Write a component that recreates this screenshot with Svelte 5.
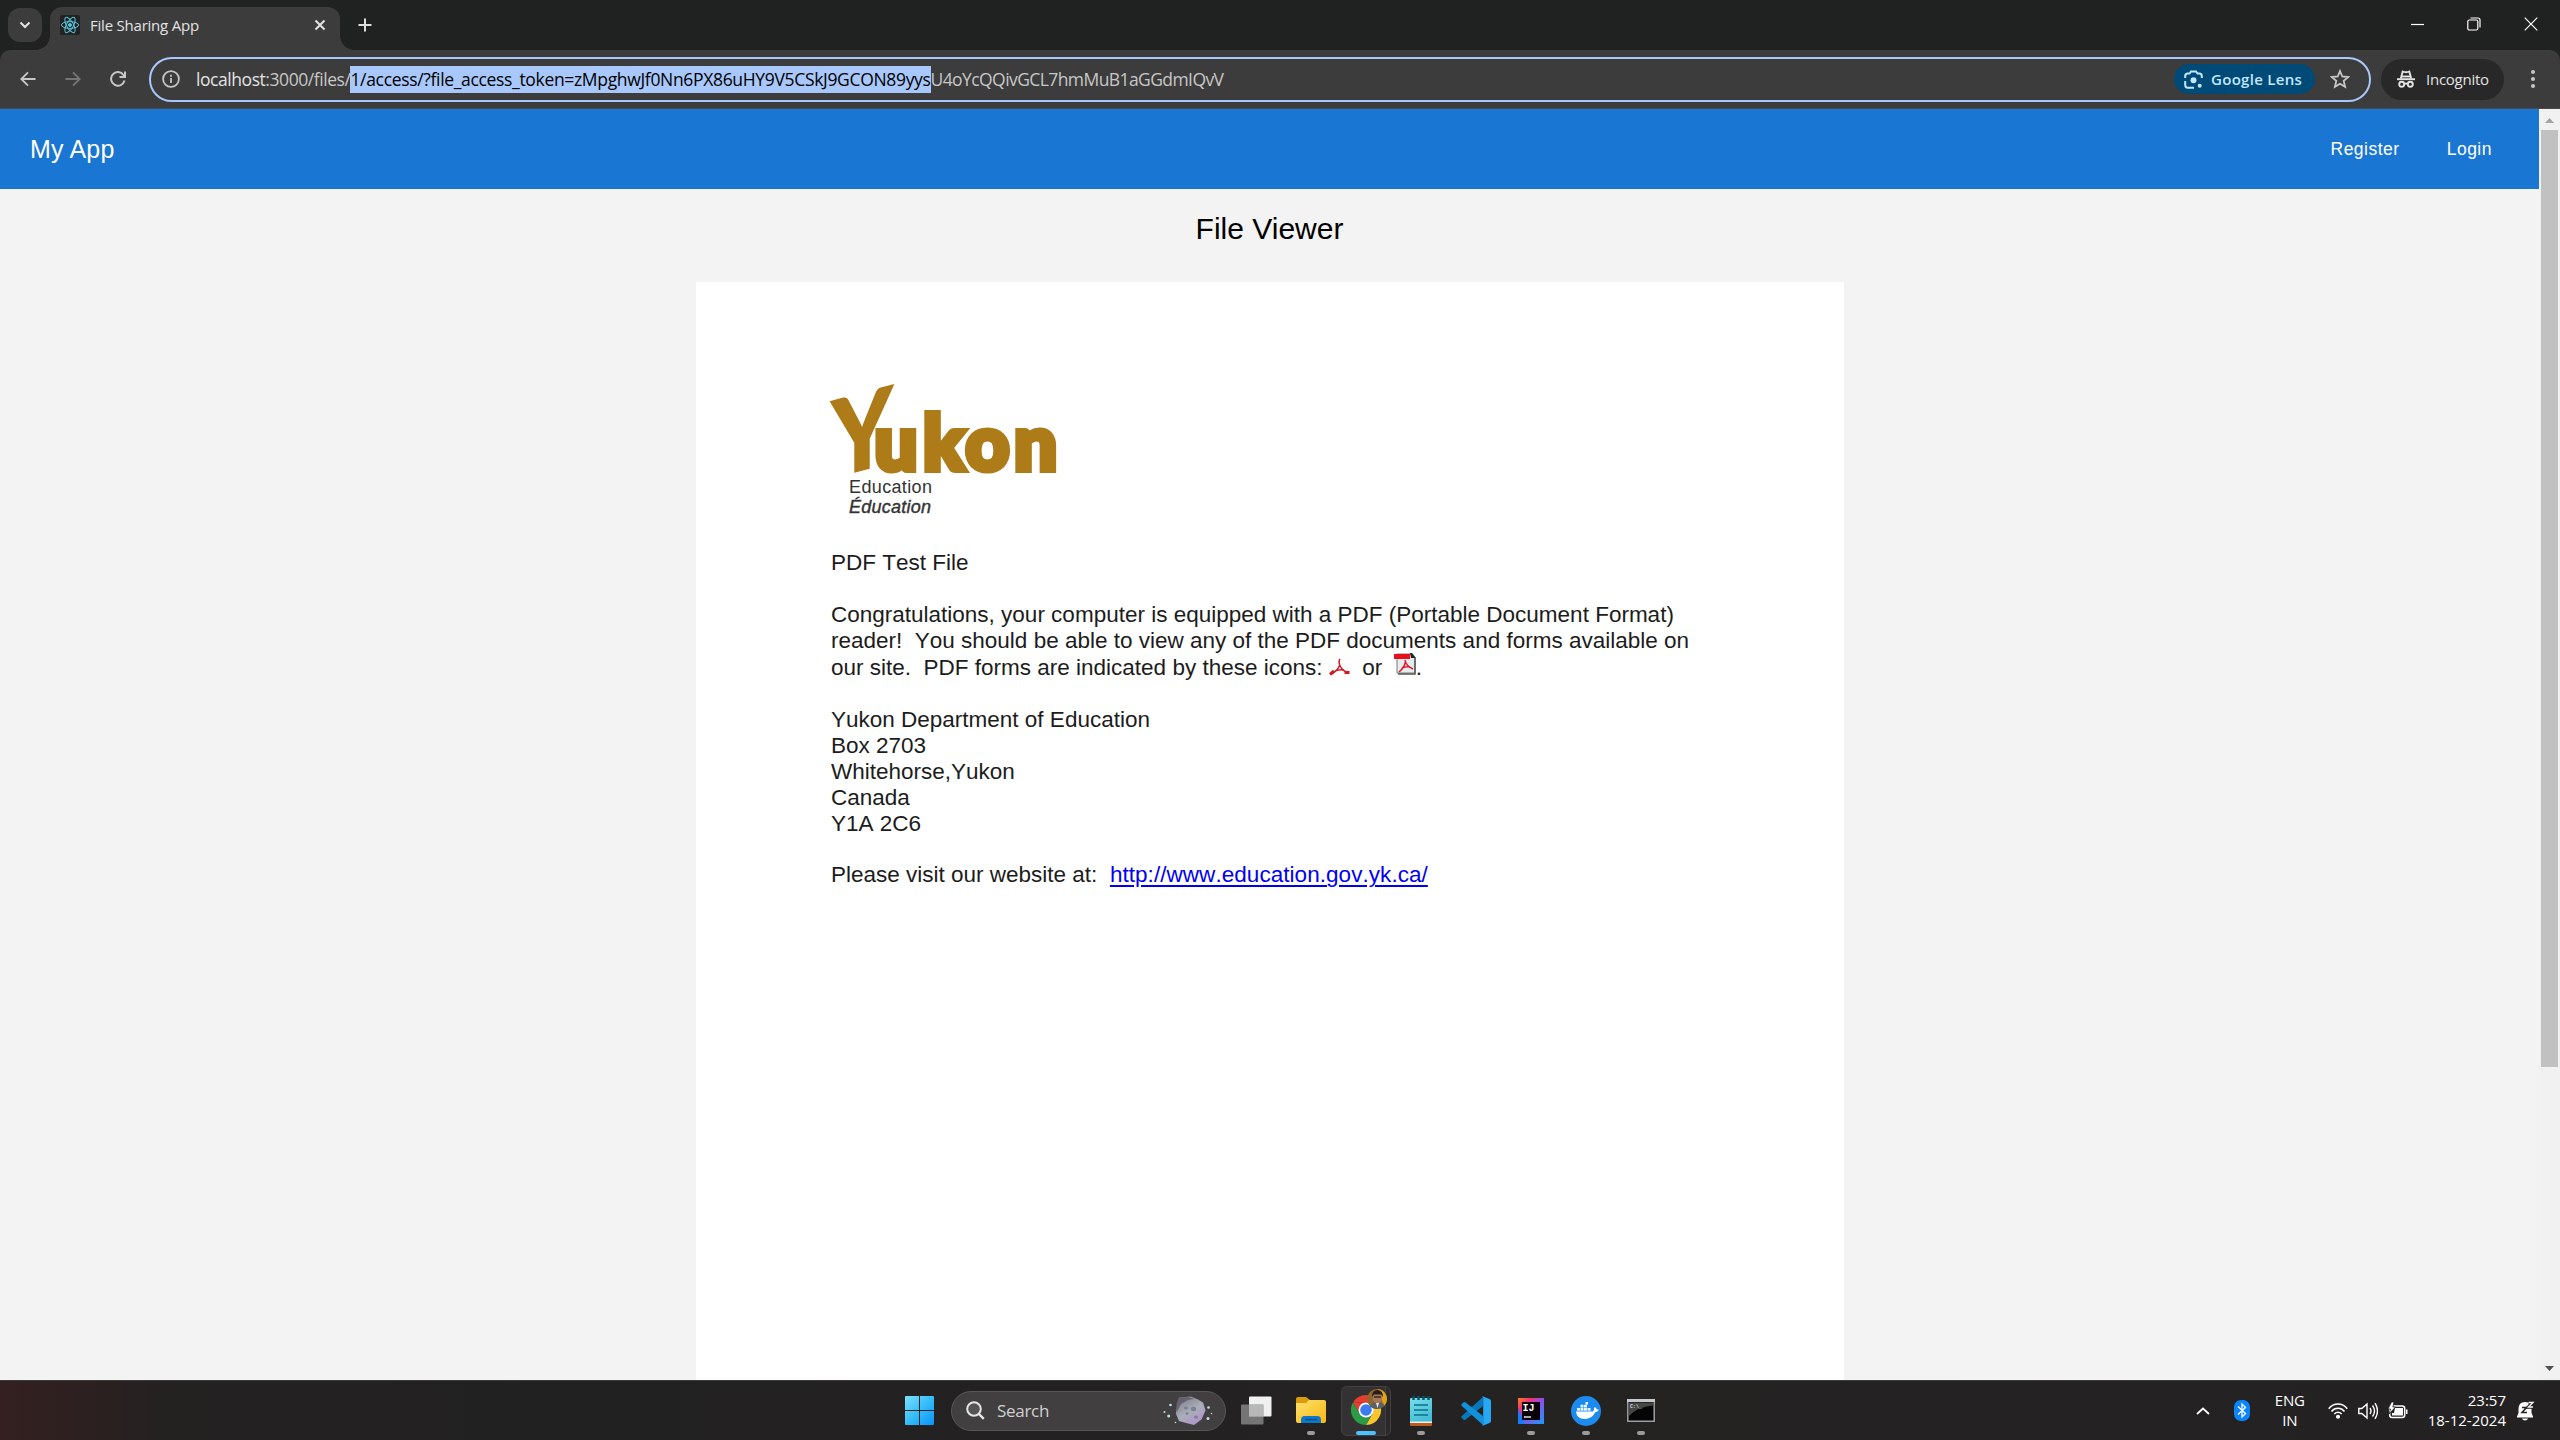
<script>
  const intro = [
    'Congratulations, your computer is equipped with a PDF (Portable Document Format)',
    'reader!\u00a0 You should be able to view any of the PDF documents and forms available on',
  ];
  const address = ['Yukon Department of Education', 'Box 2703', 'Whitehorse,Yukon', 'Canada', 'Y1A 2C6'];
</script>

<div class="screen">
  <div class="tabs">
    <div class="tabsearch"><svg width="12" height="8" viewBox="0 0 12 8"><path d="M1.5 1.5 6 6l4.500-4.500" fill="none" stroke="#e3e3e3" stroke-width="2" /></svg></div>
    <div class="tab">
      <div class="fav">
        <svg width="20" height="20" viewBox="-10 -10 20 20" fill="none" stroke="#58c4dc" stroke-width="1">
          <ellipse rx="8.600" ry="3.400" /><ellipse rx="8.600" ry="3.400" transform="rotate(60)" /><ellipse rx="8.600" ry="3.400" transform="rotate(120)" />
          <circle r="1.500" fill="#58c4dc" />
        </svg>
      </div>
      <span class="tabtitle">File Sharing App</span>
      <svg class="tabclose" width="12" height="12" viewBox="0 0 12 12"><path d="m1.500 1.500 9 9m0-9-9 9" stroke="#e3e3e3" stroke-width="2" /></svg>
    </div>
    <svg class="plus" width="14" height="14" viewBox="0 0 14 14"><path d="M7 0.500v13M0.500 7h13" stroke="#dedede" stroke-width="2" /></svg>
    <div class="wincontrols">
      <svg width="13" height="14" viewBox="0 0 13 14"><path d="M0 7.500h13" stroke="#fff" stroke-width="1.200" /></svg>
      <svg width="14" height="14" viewBox="0 0 14 14" fill="none" stroke="#fff" stroke-width="1.200"><rect x="0.800" y="3" width="10" height="10" rx="1.500" /><path d="M3.500 1h7.500q2 0 2 2v7.500" /></svg>
      <svg width="14" height="14" viewBox="0 0 14 14"><path d="m0.700 0.700 12.600 12.600m0-12.600L0.700 13.300" stroke="#fff" stroke-width="1.200" /></svg>
    </div>
  </div>

  <div class="toolbar">
    <div class="nav">
      <svg width="16" height="16" viewBox="0 0 16 16" fill="none" stroke="#c7c7c7" stroke-width="1.900"><path d="M15.500 8H1.500M8 1.300 1.300 8 8 14.700" /></svg>
      <svg width="16" height="16" viewBox="0 0 16 16" fill="none" stroke="#757575" stroke-width="1.900"><path d="M0.500 8h14M8 1.300 14.700 8 8 14.700" /></svg>
      <svg width="16" height="16" viewBox="0 0 16 16" fill="none" stroke="#c7c7c7" stroke-width="2"><path d="M14.500 9.500A6.800 6.800 0 1 1 13.500 4L15 6M15 0.500V6H9.500" /></svg>
    </div>
    <div class="omnibox">
      <svg class="info" width="18" height="18" viewBox="0 0 18 18"><circle cx="9" cy="9" r="7.900" fill="none" stroke="#c7c7c7" stroke-width="1.800" /><path d="M9 8v5M9 4.800v1.900" stroke="#c7c7c7" stroke-width="1.800" /></svg>
      <div class="url"><span class="host">localhost</span><span class="path">:3000/files/</span><span class="selected">1/access/?file_access_token=zMpghwJf0Nn6PX86uHY9V5CSkJ9GCON89yys</span><span class="rest">U4oYcQQivGCL7hmMuB1aGGdmIQvV</span></div>
      <div class="lens">
        <svg width="19" height="19" viewBox="0 0 19 19" fill="none" stroke="#c2e7ff" stroke-width="2"><path d="M1.200 8V6q0-2.500 2.500-2.500H5.500L7 1.500h5l1.500 2h1.800q2.500 0 2.500 2.500V8M1.200 11v4q0 2.700 2.500 2.700H10" /><circle cx="9.500" cy="10.200" r="3" fill="#c2e7ff" stroke="none" /><circle cx="15.700" cy="15.700" r="2" fill="#c2e7ff" stroke="none" /></svg>
        <span>Google Lens</span>
      </div>
      <svg class="star" width="20" height="20" viewBox="0 0 20 20"><path d="m10 2 2.300 5.500 6 .5-4.600 3.900 1.400 5.900L10 14.700l-5.100 3.100 1.400-5.900L1.700 8l6-.5z" fill="none" stroke="#c7c7c7" stroke-width="1.800" /></svg>
    </div>
    <div class="incognito">
      <svg width="18" height="18" viewBox="0 0 18 18" fill="none" stroke="#e3e3e3" stroke-width="1.900"><path d="M0 9.200h18" /><path d="M3.800 8.500 5.700 1.500q1.600.7 3.300.7t3.300-.7l1.900 7" /><path d="M4 6.500h10" /><circle cx="4.700" cy="14.300" r="2.500" /><circle cx="13.300" cy="14.300" r="2.500" /><path d="M7.200 14q1.800-1 3.600 0" /></svg>
      <span>Incognito</span>
    </div>
    <svg class="kebab" width="4" height="18" viewBox="0 0 4 18" fill="#c7c7c7"><circle cx="2" cy="2" r="2" /><circle cx="2" cy="9" r="2" /><circle cx="2" cy="16" r="2" /></svg>
  </div>

  <div class="viewport">
    <main>
      <header>
        <span class="brand">My App</span>
        <span class="link register">Register</span>
        <span class="link login">Login</span>
      </header>
      <h1>File Viewer</h1>
      <article>
        <svg class="logo" width="240" height="140" viewBox="0 0 240 140">
          <g class="wordmark">
            <text x="1" y="90" class="cap" textLength="60" lengthAdjust="spacingAndGlyphs" transform="translate(30 90) skewY(-15) translate(-30 -90)">Y</text>
            <text x="43.500 92 134.500 183" y="89.500" class="low">ukon</text>
          </g>
          <text x="18" y="113" class="dept" textLength="83">Education</text>
          <text x="18" y="133" class="dept fr" textLength="82">Éducation</text>
        </svg>
        <div class="copy">
          <p>PDF Test File</p>
          <p>
            {#each intro as line}<span class="line">{line}</span>{/each}
            <span class="line icons">our site.&nbsp; PDF forms are indicated by these icons: <svg class="acro" width="21" height="18" viewBox="0 0 21 18" fill="none" stroke="#cf1b22"><path d="M11 1q-1.500 1.500-.5 5.500 2 5.500 7 7.500M10.500 7.500Q8 13.500 2.500 15.800" stroke-width="1.500" /><path d="M6 12.800q4-1.300 8.500-1" stroke-width="1.400" /><path d="M1 16.500 5 13M15.500 14.500h5" stroke-width="3" /></svg>&nbsp; or&nbsp; <svg class="pdf" width="22" height="23" viewBox="0 0 22 23"><path d="M3 2h14l4 4v15H3z" fill="#e5ecea" stroke="#71807e" /><path d="M21 6v16H4" fill="none" stroke="#555" stroke-width="1.500" /><path d="M16 1h2l4 5h-5z" fill="#222" /><path d="M0 2h16v5H0z" fill="#e8101b" /><path d="M11 8q1 6 8 9M11.500 10Q10 16 5 20M8 16q4-2 8-1" fill="none" stroke="#dc1630" stroke-width="1.500" /></svg>.</span>
          </p>
          <p>{#each address as line}<span class="line">{line}</span>{/each}</p>
          <p>Please visit our website at:&nbsp; <span class="web">http://www.education.gov.yk.ca/</span></p>
        </div>
      </article>
    </main>
    <div class="scrollbar">
      <svg width="9" height="5" viewBox="0 0 9 5"><path d="M0 5 4.500 0 9 5z" fill="#a3a3a3" /></svg>
      <div class="thumb"></div>
      <svg class="down" width="9" height="5" viewBox="0 0 9 5"><path d="M0 0h9L4.500 5z" fill="#505050" /></svg>
    </div>
  </div>

  <footer>
    <div class="apps">
      <svg class="win" width="29" height="29" viewBox="0 0 29 29">
        <defs><linearGradient id="wg" x1="0" y1="0" x2="29" y2="29" gradientUnits="userSpaceOnUse"><stop stop-color="#7fe0ff" /><stop offset="0.500" stop-color="#35bdf8" /><stop offset="1" stop-color="#0a93fb" /></linearGradient></defs>
        <path d="M0 1q0-1 1-1h13v14H0zM15 0h13q1 0 1 1v13H15zM0 15h14v14H1q-1 0-1-1zM15 15h14v13q0 1-1 1H15z" fill="url(#wg)" />
      </svg>
      <div class="search">
        <svg width="19" height="19" viewBox="0 0 19 19"><circle cx="8" cy="8" r="6.800" fill="#555" stroke="#e6e6e6" stroke-width="2" /><path d="m12.800 12.800 5 5" stroke="#e6e6e6" stroke-width="2.400" /></svg>
        <span>Search</span>
        <svg class="rock" width="50" height="30" viewBox="0 0 50 30">
          <defs><linearGradient id="rg" x1="0" y1="0" x2="0.600" y2="1"><stop stop-color="#77717f" /><stop offset="0.250" stop-color="#8e8c99" /><stop offset="0.600" stop-color="#a8afb9" /><stop offset="1" stop-color="#b294cc" /></linearGradient></defs>
          <path d="M16 1.500 28 .5l7 3 5 3 2.500 8-4 9-7.500 5.500-8-2-7-2-3-7 1-11z" fill="url(#rg)" />
          <path d="M16 2 13 8l1 8 4-8 7-4 6-1-6-2z" fill="#575062" opacity="0.700" />
          <g fill="#7b8390"><ellipse cx="23" cy="12" rx="2" ry="1.600" /><ellipse cx="30.500" cy="13" rx="2.700" ry="2.200" /><ellipse cx="24" cy="17.500" rx="1.500" ry="1.200" /><ellipse cx="33" cy="21" rx="2" ry="1.500" /></g>
          <g fill="#bfe2ea"><circle cx="7.500" cy="9" r="1.300" /><circle cx="1.500" cy="16" r="1" /><circle cx="5.700" cy="20" r="1.500" /><circle cx="12.500" cy="26.500" r="0.800" /><circle cx="45.500" cy="11.500" r="1.300" /><circle cx="48.500" cy="17.500" r="0.800" /><circle cx="45" cy="22.500" r="1.500" /></g>
        </svg>
      </div>
      <svg class="taskview" width="31" height="29" viewBox="0 0 31 29"><rect x="8" y="0.500" width="22.500" height="20" rx="1" fill="#f0f0f0" /><rect y="8.500" width="22.500" height="20" rx="1" fill="#8b8b8b" opacity="0.800" /><path d="M8 8.500h14.500v12H8z" fill="#b8b8b8" /></svg>
      <div class="app folder">
        <svg width="30" height="29" viewBox="0 0 30 29"><defs><linearGradient id="fg" x2="1" y2="1"><stop stop-color="#ffe06e" /><stop offset="1" stop-color="#f9b812" /></linearGradient></defs><path d="M0 3q0-2 2-2h8l4 3h-1v6H0z" fill="#dc9c09" /><path d="M0 7h10l3-3h15q2 0 2 2v19q0 2-2 2H2q-2 0-2-2z" fill="url(#fg)" /><path d="M5 27v-3q0-4 3.500-4h13q3.500 0 3.500 4v3z" fill="#1076c6" /><path d="M9 23.500h12" stroke="#0b5292" stroke-width="1.500" /></svg>
        <i></i>
      </div>
      <div class="app chrome">
        <svg width="36" height="36" viewBox="0 0 36 36">
          <path d="M2 13.500A15 15 0 0 1 28 13.500H15z" fill="#e53d32" />
          <path d="M2 13.500H15V21L8.500 24.700z" fill="#e53d32" />
          <path d="M15 21 28 13.500A15 15 0 0 1 15 36l6.500-11.300z" fill="#fcc72e" />
          <path d="M15 36A15 15 0 0 1 2 13.500L8.500 24.700l13-.1z" fill="#2c9b45" />
          <circle cx="15" cy="21" r="7.500" fill="#fff" /><circle cx="15" cy="21" r="5.800" fill="#3a7cf0" />
          <circle cx="26" cy="10" r="10" fill="#8f672d" /><path d="M27 0a10 10 0 0 1 6 17z" fill="#dda415" />
          <ellipse cx="26.500" cy="8.500" rx="4.700" ry="6" fill="#a8785d" /><path d="M21 8q0-7 5.500-7T32 8L30 5.500h-7z" fill="#271d1a" /><path d="M23 8h7" stroke="#30201b" stroke-width="1.400" /><path d="M18.500 17q2-3 6-3.500l2 2 2-2q4 .5 5 3-3 3.500-7.500 3.500t-7.500-3z" fill="#59616b" /><path d="M25 14h3l-1.500 5z" fill="#e9e4dc" />
        </svg>
        <i class="active"></i>
      </div>
      <div class="app notepad">
        <svg width="22" height="30" viewBox="0 0 22 30"><defs><linearGradient id="ng" y2="1" x2="0.500"><stop stop-color="#79deeb" /><stop offset="1" stop-color="#45bdd7" /></linearGradient></defs><path d="M0 25h22v4q0 1-1 1H1q-1 0-1-1z" fill="#b95c1e" /><path d="M0 24h22v3H0z" fill="#eee" /><path d="M0 3q0-1 1-1h20q1 0 1 1v22.500H0z" fill="url(#ng)" /><path d="M4 9h14M4 14h14M4 19h14" stroke="#0d7088" stroke-width="1.700" /><path d="M3.500 0v4M8.500 0v4M13.500 0v4M18.500 0v4" stroke="#07566c" stroke-width="2.400" /></svg>
        <i></i>
      </div>
      <div class="app code">
        <svg width="30" height="30" viewBox="0 0 30 30"><path d="M22 1 .8 20q-1 1 0 2l1.500 1.500q1 1 2 .2L22 10z" fill="#0878bd" /><path d="M22 29 .8 10q-1-1 0-2l1.500-1.500q1-1 2-.2L22 20z" fill="#1191dd" /><path d="m21 0 7.500 3q1.500.7 1.500 2v20q0 1.500-1.500 2L21 30q1.200-.8 1.200-2V2q0-1.200-1.200-2z" fill="#27a8f2" /></svg>
      </div>
      <div class="app idea">
        <svg width="26" height="26" viewBox="0 0 26 26"><defs><linearGradient id="ig" x2="1" y2="1"><stop stop-color="#f7811d" /><stop offset="0.250" stop-color="#f8316e" /><stop offset="0.500" stop-color="#8d4de8" /><stop offset="1" stop-color="#169df8" /></linearGradient></defs><path d="M0 0h26v26H0z" fill="url(#ig)" /><path d="M0 10 7 26H0z" fill="#147dfa" /><path d="M4 4h18v18H4z" fill="#080008" /><text x="4.500" y="13.300" class="ij">IJ</text><path d="M6 19h7" stroke="#fff" stroke-width="1.300" /></svg>
        <i></i>
      </div>
      <div class="app docker">
        <svg width="30" height="30" viewBox="0 0 30 30"><circle cx="15" cy="15" r="15" fill="#1d8bee" /><path d="M5 15.500h17q1.300-.5 1-3.500l1-1q1.500 1 1.700 2.500 1.300-.4 2 .2-.7 2.300-3.500 2.600Q21 23 14 23q-8.500 0-9-7.500z" fill="#fff" /><g fill="#e6f5ff"><path d="M6 12h3v2.800H6zM9.500 12h3v2.800h-3zM13 12h3v2.800h-3zM16.500 12h3v2.800h-3zM9.500 8.800h3v2.700h-3zM13 8.800h3v2.700h-3zM14.500 6h2.500v2.400h-2.500z" /></g></svg>
        <i></i>
      </div>
      <div class="app term">
        <svg width="28" height="23" viewBox="0 0 28 23"><path d="M.8.800h26.400v21.400H.8z" fill="#050505" stroke="#9ba0a6" stroke-width="1.500" /><path d="M0 0h28v3H0z" fill="#c4c8cd" /><path d="M2 3.500h24v3Q10 8 2 17z" fill="#464646" /><text x="3" y="9" class="cmd">C:\_</text></svg>
        <i></i>
      </div>
    </div>
    <div class="tray">
      <svg class="chev" width="14" height="8" viewBox="0 0 14 8"><path d="m1 7 6-5.500L13 7" fill="none" stroke="#fff" stroke-width="1.800" /></svg>
      <svg class="bt" width="16" height="21" viewBox="0 0 16 21"><rect width="16" height="21" rx="7" fill="#0a84ff" /><path d="m4 6.500 7.500 7L8 17V4l3.500 3.500-7.500 7" fill="none" stroke="#fff" stroke-width="1.300" /></svg>
      <div class="lang"><span>ENG</span><span>IN</span></div>
      <svg class="wifi" width="20" height="16" viewBox="0 0 20 16" fill="none" stroke="#fff" stroke-width="1.500"><path d="M.7 5.700Q4.500 1 10 1t9.300 4.700M3.500 8.500Q6 5.300 10 5.300t6.500 3.200M6.300 11Q8 9.300 10 9.300t3.700 1.700" /><circle cx="10" cy="13.700" r="1.300" fill="#fff" /></svg>
      <svg class="vol" width="20" height="18" viewBox="0 0 20 18" fill="none" stroke="#fff" stroke-width="1.400"><path d="M.8 6.500h3L9 2v14l-5.200-4.500h-3zM12 6q2 3 0 6M14.500 3.500q4 5.500 0 11M17 1.200q5 7.800 0 15.600" /></svg>
      <svg class="bat" width="20" height="17" viewBox="0 0 20 17"><rect x="1.700" y="4" width="15" height="11.500" rx="2.500" fill="none" stroke="#fff" stroke-width="1.500" /><path d="M7 6h8v7.500H4V11h2zM18 7.500h1.500V12H18z" fill="#fff" /><path d="M3.500 0 0 7h2.500L1 12l6.500-7H4.800L6 0z" fill="#fff" stroke="#232122" stroke-width="0.800" /></svg>
      <div class="clock"><span>23:57</span><span>18-12-2024</span></div>
      <svg class="bell" width="18" height="20" viewBox="0 0 18 20"><path d="M0 15.500 1.500 12V8Q1.500 1 8 1t6.500 7v4L16 15.500v1H0zM5 17.500h6q-.5 2-3 2t-3-2z" fill="#fff" /><path d="M5 6.500h4.500L5 11.500h5" fill="none" stroke="#232122" stroke-width="1.500" /><path d="M11.500 1.500h4.500l-4.500 4.500H16" fill="none" stroke="#232122" stroke-width="3.500" /><path d="M11.500 1.500h4.500l-4.500 4.500H16" fill="none" stroke="#fff" stroke-width="1.300" /></svg>
    </div>
  </footer>
</div>

<style>
  :global(body) { margin: 0; background: #202221; }
  .screen { width: 2560px; height: 1440px; display: flex; flex-direction: column; overflow: hidden; font-family: 'Open Sans', 'Noto Sans', sans-serif; white-space: nowrap; }
  svg { display: block; flex: none; }
  .tabs { height: 50px; background: #202221; display: flex; align-items: flex-start; flex: none; }
  .tabsearch { width: 34px; height: 34px; margin: 8px 8px 0; border-radius: 12px; background: #3c3c3c; display: flex; align-items: center; justify-content: center; }
  .tab { position: relative; width: 290px; height: 43px; margin-top: 7px; border-radius: 12px 12px 0 0; background: #3c3c3c; display: flex; align-items: center; padding: 0 14px 7px 10px; box-sizing: border-box; }
  .tab::before, .tab::after { content: ''; position: absolute; bottom: 0; width: 14px; height: 14px; }
  .tab::before { left: -14px; background: radial-gradient(circle at 0 0, transparent 13.5px, #3c3c3c 14px); }
  .tab::after { right: -14px; background: radial-gradient(circle at 100% 0, transparent 13.5px, #3c3c3c 14px); }
  .fav { width: 20px; height: 20px; background: #222; border-radius: 2px; }
  .tabtitle { margin-left: 10px; font-size: 15px; letter-spacing: -0.22px; color: #e3e3e3; flex: 1; }
  .plus { margin: 18px 0 0 18px; }
  .wincontrols { margin: 17px 22px 0 auto; display: flex; gap: 43px; }
  .toolbar { height: 59px; background: #3c3c3c; box-sizing: border-box; border-bottom: 1px solid #4b4b4b; display: flex; align-items: center; flex: none; border-radius: 10px 10px 0 0; }
  .nav { display: flex; gap: 29px; padding-left: 20px; width: 129px; }
  .omnibox { width: 2222px; height: 45px; box-sizing: border-box; border: 2.5px solid #a8c7fa; border-radius: 23px; display: flex; align-items: center; padding: 0 19px 0 11px; }
  .url { margin-left: 16px; font-size: 17.5px; color: #c7c7c7; display: flex; line-height: 27px; }
  .host { color: #e3e3e3; letter-spacing: -0.44px; }
  .path { letter-spacing: -0.44px; }
  .selected { background: #a8c7fa; color: #000; letter-spacing: -0.33px; }
  .rest { letter-spacing: -0.58px; }
  .lens { margin-left: auto; width: 141px; height: 30px; border-radius: 15px; background: #004a77; color: #c2e7ff; display: flex; align-items: center; gap: 8px; padding-left: 10px; box-sizing: border-box; font-size: 15px; font-weight: 600; letter-spacing: 0.3px; }
  .star { margin-left: 15px; }
  .incognito { margin-left: 10px; width: 123px; height: 41px; border-radius: 21px; background: #282828; display: flex; align-items: center; padding: 0 0 1px 16px; gap: 11px; box-sizing: border-box; color: #e3e3e3; font-size: 15px; letter-spacing: -0.25px; }
  .kebab { margin-left: 27px; }
  .viewport { height: 1271px; display: flex; flex: none; }
  main { width: 2539px; background: #f3f3f3; overflow: hidden; display: flex; flex-direction: column; align-items: center; font-family: 'Liberation Sans', Arial, sans-serif; }
  header { width: 2539px; height: 80px; box-sizing: border-box; padding: 0 47px 0 30px; background: #1976d2; color: #fff; display: flex; align-items: center; flex: none; }
  .brand { font-size: 25px; letter-spacing: 0.19px; margin-right: auto; }
  .link { font-size: 17.5px; letter-spacing: 0.5px; }
  .login { margin-left: 47px; }
  h1 { flex: none; margin: 22px 0 0; font-size: 30px; line-height: 35px; font-weight: 400; color: #000; height: 71px; box-sizing: border-box; }
  article { width: 1148px; height: 1200px; background: #fff; box-sizing: border-box; padding: 98px 136px 0 135.5px; flex: none; color: #1c1c1c; }
  .logo { overflow: visible; }
  .wordmark { fill: #ad7b18; stroke: #ad7b18; stroke-linejoin: miter; font-family: Lato, Inter, sans-serif; font-weight: 900; }
  .cap { font-size: 105px; stroke-width: 2px; }
  .low { font-size: 76px; stroke-width: 6px; }
  .dept { font: 18px 'Liberation Sans', Arial, sans-serif; fill: #333; }
  .fr { font-style: italic; stroke: #333; stroke-width: 0.4px; }
  .copy { margin-top: 30px; font-size: 22.5px; line-height: 26px; font-kerning: none; }
  p { margin: 0 0 25.8px; }
  .line { display: block; height: 26px; }
  .copy svg { display: inline-block; vertical-align: -1px; }
  .copy .pdf { vertical-align: 0; margin: -4px 0 0 -1px; }
  .icons { padding-top: 1px; }
  .web { color: #0000f5; text-decoration: underline; text-underline-offset: 3px; letter-spacing: 0.05px; }
  .scrollbar { width: 21px; background: #f1f1f1; display: flex; flex-direction: column; align-items: center; padding: 9px 0; box-sizing: border-box; }
  .thumb { width: 17px; height: 937px; background: #c1c1c1; margin-top: 7px; }
  .down { margin-top: auto; }
  footer { height: 60px; box-sizing: border-box; border-top: 1px solid #3c3b3b; background: linear-gradient(90deg, #342020, #2b2020 4%, #242121 6.5%, #222122 20%, #232122 45%, #242322 60%, #232122); display: flex; align-items: center; justify-content: space-between; color: #fff; }
  .apps { display: flex; align-items: center; padding-left: 905px; height: 59px; }
  .search { margin-left: 17px; width: 275px; height: 40px; box-sizing: border-box; border: 1px solid #585657; border-radius: 20px; background: #413f40; display: flex; align-items: center; padding: 0 12px 0 14px; font-size: 17px; letter-spacing: -0.3px; color: #d0d0d0; }
  .search span { margin-left: 12px; }
  .rock { margin-left: auto; }
  .taskview { margin-left: 15px; }
  .app { height: 50px; width: 55px; display: flex; flex-direction: column; align-items: center; justify-content: center; position: relative; }
  .app i { position: absolute; bottom: 1px; left: 24px; width: 8px; height: 4px; border-radius: 2px; background: #9b9b9b; }
  .folder { margin-left: 11px; }
  .chrome { width: 50px; background: linear-gradient(90deg, #333132 43px, #434142 43px 44px, #2b292a 44px); border: 1px solid #434142; border-radius: 6px; box-sizing: border-box; margin: 0 2px 0 3px; }
  .chrome svg { align-self: flex-start; margin: -7px 0 0 9px; }
  .app .active { width: 20px; left: 14px; bottom: 0; background: #4cc2ff; }
  .ij { font: bold 10px 'Liberation Mono', monospace; fill: #fff; }
  .cmd { font: bold 5px 'Liberation Mono', monospace; fill: #ddd; }
  .tray { display: flex; align-items: center; padding-right: 25px; font-size: 15px; line-height: 20px; }
  .bt { margin-left: 24px; }
  .lang { display: flex; flex-direction: column; align-items: center; margin-left: 25px; letter-spacing: -0.2px; }
  .wifi { margin-left: 23px; }
  .vol { margin-left: 10px; }
  .bat { margin-left: 10px; }
  .clock { display: flex; flex-direction: column; align-items: flex-end; margin-left: 20px; }
  .clock, .lang { padding-bottom: 1px; }
  .bell { margin-left: 11px; }
</style>
